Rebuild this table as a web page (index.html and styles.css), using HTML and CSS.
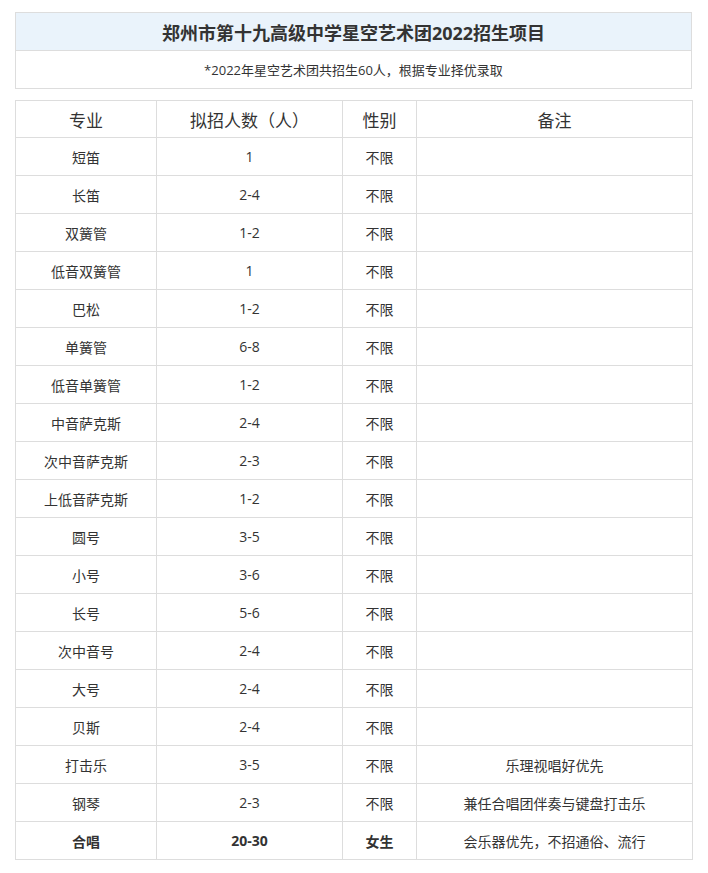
FILE: index.html
```html
<!DOCTYPE html>
<html lang="zh">
<head>
<meta charset="utf-8">
<link rel="stylesheet" href="styles.css">
</head>
<body>
<div class="page">
  <table class="intro">
    <tr><td class="title">郑州市第十九高级中学星空艺术团2022招生项目</td></tr>
    <tr><td class="note">*2022年星空艺术团共招生60人，根据专业择优录取</td></tr>
  </table>
  <table class="plan">
    <colgroup>
      <col class="c1"><col class="c2"><col class="c3"><col class="c4">
    </colgroup>
    <thead>
      <tr><th>专业</th><th>拟招人数（人）</th><th>性别</th><th>备注</th></tr>
    </thead>
    <tbody>
      <tr><td>短笛</td><td>1</td><td>不限</td><td></td></tr>
      <tr><td>长笛</td><td>2-4</td><td>不限</td><td></td></tr>
      <tr><td>双簧管</td><td>1-2</td><td>不限</td><td></td></tr>
      <tr><td>低音双簧管</td><td>1</td><td>不限</td><td></td></tr>
      <tr><td>巴松</td><td>1-2</td><td>不限</td><td></td></tr>
      <tr><td>单簧管</td><td>6-8</td><td>不限</td><td></td></tr>
      <tr><td>低音单簧管</td><td>1-2</td><td>不限</td><td></td></tr>
      <tr><td>中音萨克斯</td><td>2-4</td><td>不限</td><td></td></tr>
      <tr><td>次中音萨克斯</td><td>2-3</td><td>不限</td><td></td></tr>
      <tr><td>上低音萨克斯</td><td>1-2</td><td>不限</td><td></td></tr>
      <tr><td>圆号</td><td>3-5</td><td>不限</td><td></td></tr>
      <tr><td>小号</td><td>3-6</td><td>不限</td><td></td></tr>
      <tr><td>长号</td><td>5-6</td><td>不限</td><td></td></tr>
      <tr><td>次中音号</td><td>2-4</td><td>不限</td><td></td></tr>
      <tr><td>大号</td><td>2-4</td><td>不限</td><td></td></tr>
      <tr><td>贝斯</td><td>2-4</td><td>不限</td><td></td></tr>
      <tr><td>打击乐</td><td>3-5</td><td>不限</td><td>乐理视唱好优先</td></tr>
      <tr><td>钢琴</td><td>2-3</td><td>不限</td><td>兼任合唱团伴奏与键盘打击乐</td></tr>
      <tr class="strong"><td>合唱</td><td>20-30</td><td>女生</td><td class="normal">会乐器优先，不招通俗、流行</td></tr>
    </tbody>
  </table>
</div>
</body>
</html>
```
FILE: styles.css
```css
html, body {
  margin: 0;
  padding: 0;
  background: #ffffff;
}
.page {
  padding: 12px 0 0 15px;
  font-family: "Open Sans", "Noto Sans CJK SC", sans-serif;
  color: #333333;
}
table {
  border-collapse: collapse;
  width: 677px;
  table-layout: fixed;
}
td, th {
  border: 1px solid #dddddd;
  padding: 0;
  text-align: center;
  vertical-align: middle;
}
.intro td {
  height: 37px;
}
.intro .title {
  background: #eaf3fb;
  font-size: 18px;
  font-weight: bold;
  color: #333333;
}
.intro .note {
  font-size: 13px;
}
.plan {
  margin-top: 11px;
}
.plan .c1 { width: 141px; }
.plan .c2 { width: 186px; }
.plan .c3 { width: 74px; }
.plan .c4 { width: 276px; }
.plan th {
  height: 36px;
  font-size: 17px;
  font-weight: normal;
}
.plan td {
  height: 37px;
  font-size: 14px;
}
.plan .strong td {
  font-weight: bold;
}
.plan .strong td.normal {
  font-weight: normal;
}
```
